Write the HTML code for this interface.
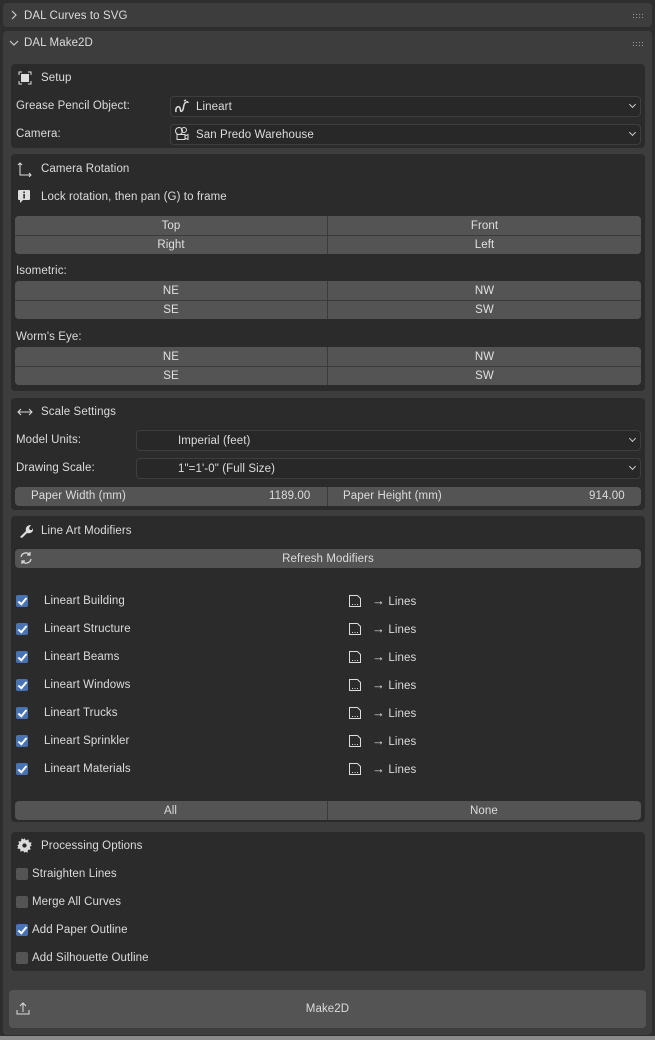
<!DOCTYPE html>
<html><head><meta charset="utf-8"><style>
*{box-sizing:border-box;margin:0;padding:0}
body{width:655px;height:1040px;background:#2e2e2e;position:relative;overflow:hidden;font-family:"Liberation Sans","DejaVu Sans",sans-serif;font-size:11.5px;letter-spacing:0.1px;color:#dcdcdc}
.a{position:absolute}
.pan{position:absolute;left:3px;right:3px;background:#3d3d3d;border-radius:4px}
.box{position:absolute;left:11px;width:634px;background:#2b2b2b;border-radius:4px}
.t{position:absolute;white-space:nowrap;line-height:16px}
.btn{position:absolute;background:#545454;text-align:center;line-height:20px;color:#e0e0e0}
.dd{position:absolute;left:170px;width:471px;height:21px;background:#282828;border:1px solid #3e3e3e;border-radius:4px;line-height:20px;padding-left:25px}
.dd:after{content:"";position:absolute;right:5px;top:5px;width:4px;height:4px;border-right:1.5px solid #ccc;border-bottom:1.5px solid #ccc;transform:rotate(45deg)}
.cb{position:absolute;width:12px;height:12px;border-radius:2px;background:#4772b3}
.cb:after{content:"";position:absolute;left:3.5px;top:1px;width:3px;height:7px;border-right:2px solid #fff;border-bottom:2px solid #fff;transform:rotate(40deg)}
.cbo{position:absolute;width:12px;height:12px;border-radius:2px;background:#545454}
.dots{position:absolute;right:11px;width:11px;height:5px;background-image:radial-gradient(#999 0.6px,transparent 0.8px);background-size:3px 3px}
</style></head><body>
<div class="pan" style="top:3px;height:24px"></div>
<svg class="a" style="left:11px;top:10px" width="6" height="10" viewBox="0 0 6 10" fill="none" stroke="#ccc" stroke-width="1.2"><path d="M1 1l4 4-4 4"/></svg>
<div class="t" style="left:24px;top:8px">DAL Curves to SVG</div>
<div class="dots" style="top:13px;right:12px"></div>

<div class="pan" style="top:31px;height:1004px"></div>
<svg class="a" style="left:9px;top:40px" width="10" height="6" viewBox="0 0 10 6" fill="none" stroke="#ccc" stroke-width="1.2"><path d="M1 1l4 4 4-4"/></svg>
<div class="t" style="left:24px;top:35px">DAL Make2D</div>
<div class="dots" style="top:41px;right:12px"></div>

<!-- Setup -->
<div class="box" style="top:64px;height:84px"></div>
<svg class="a" style="left:18px;top:71px" width="14" height="14" viewBox="0 0 14 14" fill="none" stroke="#ddd" stroke-width="1"><path d="M1 4V1h3M10 1h3v3M13 10v3h-3M4 13H1v-3"/><rect x="3.5" y="3.5" width="7" height="7" fill="#ddd"/></svg>
<div class="t" style="left:41px;top:70px">Setup</div>
<div class="t" style="left:16px;top:98px">Grease Pencil Object:</div>
<div class="dd" style="top:96px">Lineart</div>
<svg class="a" style="left:174px;top:99px" width="16" height="14" viewBox="0 0 16 14" fill="none" stroke="#ddd" stroke-width="1.5"><path d="M2 13C1 8 5 6 6 9s0 4 2 3 1-6 3-8 3-1 3 0M10 2l2-1"/></svg>
<div class="t" style="left:16px;top:126px">Camera:</div>
<div class="dd" style="top:124px">San Predo Warehouse</div>
<svg class="a" style="left:174px;top:126px" width="16" height="15" viewBox="0 0 16 15" fill="none" stroke="#ddd" stroke-width="1"><circle cx="5" cy="5" r="3.5"/><circle cx="10" cy="4" r="2.5"/><rect x="3" y="8.5" width="8" height="5"/><path d="M11 10l3-1.5v5L11 12"/></svg>

<!-- Camera rotation -->
<div class="box" style="top:154px;height:237px"></div>
<svg class="a" style="left:17px;top:161px" width="16" height="16" viewBox="0 0 16 16" fill="none" stroke="#ddd" stroke-width="1"><path d="M3 2v12h11M1 4l2-2 2 2M12 12l2 2-2 2"/></svg>
<div class="t" style="left:41px;top:161px">Camera Rotation</div>
<svg class="a" style="left:17px;top:189px" width="14" height="14" viewBox="0 0 14 14"><path d="M2 1h10a1 1 0 0 1 1 1v8a1 1 0 0 1-1 1H6l-3 3v-3H2a1 1 0 0 1-1-1V2a1 1 0 0 1 1-1z" fill="#ddd"/><rect x="6.3" y="5" width="1.6" height="4.5" fill="#2b2b2b"/><rect x="6.3" y="2.5" width="1.6" height="1.6" fill="#2b2b2b"/></svg>
<div class="t" style="left:41px;top:189px">Lock rotation, then pan (G) to frame</div>
<div class="a" style="left:15px;top:216px;width:626px;height:38px;background:#545454;border-radius:4px;overflow:hidden">
<div class="btn" style="left:0;top:0;width:312px">Top</div><div class="btn" style="left:313px;top:0;width:313px">Front</div>
<div class="btn" style="left:0;top:19px;width:312px;border-top:1px solid #3a3a3a;line-height:19px">Right</div><div class="btn" style="left:313px;top:19px;width:313px;border-top:1px solid #3a3a3a;line-height:19px">Left</div>
<div class="a" style="left:312px;top:0;width:1px;height:38px;background:#3a3a3a"></div></div>
<div class="t" style="left:16px;top:263px">Isometric:</div>
<div class="a" style="left:15px;top:281px;width:626px;height:38px;background:#545454;border-radius:4px;overflow:hidden">
<div class="btn" style="left:0;top:0;width:312px">NE</div><div class="btn" style="left:313px;top:0;width:313px">NW</div>
<div class="btn" style="left:0;top:19px;width:312px;border-top:1px solid #3a3a3a;line-height:19px">SE</div><div class="btn" style="left:313px;top:19px;width:313px;border-top:1px solid #3a3a3a;line-height:19px">SW</div>
<div class="a" style="left:312px;top:0;width:1px;height:38px;background:#3a3a3a"></div></div>
<div class="t" style="left:16px;top:329px">Worm's Eye:</div>
<div class="a" style="left:15px;top:347px;width:626px;height:38px;background:#545454;border-radius:4px;overflow:hidden">
<div class="btn" style="left:0;top:0;width:312px">NE</div><div class="btn" style="left:313px;top:0;width:313px">NW</div>
<div class="btn" style="left:0;top:19px;width:312px;border-top:1px solid #3a3a3a;line-height:19px">SE</div><div class="btn" style="left:313px;top:19px;width:313px;border-top:1px solid #3a3a3a;line-height:19px">SW</div>
<div class="a" style="left:312px;top:0;width:1px;height:38px;background:#3a3a3a"></div></div>

<!-- Scale -->
<div class="box" style="top:398px;height:112px"></div>
<svg class="a" style="left:17px;top:406px" width="16" height="12" viewBox="0 0 16 12" fill="none" stroke="#ddd" stroke-width="1"><path d="M1 6h14M4 3L1 6l3 3M12 3l3 3-3 3"/></svg>
<div class="t" style="left:41px;top:404px">Scale Settings</div>
<div class="t" style="left:16px;top:432px">Model Units:</div>
<div class="dd" style="top:430px;left:136px;width:505px;padding-left:41px">Imperial (feet)</div>
<div class="t" style="left:16px;top:460px">Drawing Scale:</div>
<div class="dd" style="top:458px;left:136px;width:505px;padding-left:41px">1"=1'-0" (Full Size)</div>
<div class="a" style="left:15px;top:487px;width:626px;height:19px;background:#545454;border-radius:4px"></div>
<div class="a" style="left:327px;top:487px;width:1px;height:19px;background:#3a3a3a"></div>
<div class="t" style="left:31px;top:488px">Paper Width (mm)</div>
<div class="t" style="left:269px;top:488px">1189.00</div>
<div class="t" style="left:343px;top:488px">Paper Height (mm)</div>
<div class="t" style="left:589px;top:488px">914.00</div>

<!-- Line art -->
<div class="box" style="top:516px;height:306px"></div>
<svg class="a" style="left:17px;top:523px" width="16" height="16" viewBox="0 0 16 16"><path d="M3 14l6-6c-1-3 1-6 5-6l-2 3 1 2 2 0 1-2c1 4-3 6-6 5l-5 5z" fill="#ddd"/></svg>
<div class="t" style="left:41px;top:523px">Line Art Modifiers</div>
<div class="a" style="left:15px;top:549px;width:626px;height:19px;background:#545454;border-radius:4px;text-align:center;line-height:20px">Refresh Modifiers</div>
<svg class="a" style="left:19px;top:551px" width="14" height="14" viewBox="0 0 14 14" fill="none" stroke="#ddd" stroke-width="1.2"><path d="M2 6a5 5 0 0 1 9-2M12 8a5 5 0 0 1-9 2M11 1v3H8M3 13v-3h3"/></svg>

<div id="mods"></div>
<script>
var n=["Building","Structure","Beams","Windows","Trucks","Sprinkler","Materials"],h="";
n.forEach(function(s,i){var y=601+28*i;
h+='<div class="cb" style="left:16px;top:'+(y-6)+'px"></div><div class="t" style="left:44px;top:'+(y-8)+'px">Lineart '+s+'</div>';
h+='<svg class="a" style="left:348px;top:'+(y-7)+'px" width="14" height="14" viewBox="0 0 14 14" fill="none" stroke="#ddd" stroke-width="1"><path d="M1.5 1.5h8l3 3v8h-11z"/><path d="M4 10.5h1M6.5 10.5h1M9 10.5h1" /></svg>';
h+='<div class="t" style="left:372px;top:'+(y-8)+'px"><span style="font-size:13px">&#x2192;</span> Lines</div>';});
document.getElementById("mods").innerHTML=h;
</script>
<div class="a" style="left:15px;top:801px;width:626px;height:19px;background:#545454;border-radius:4px"></div>
<div class="a" style="left:327px;top:801px;width:1px;height:19px;background:#3a3a3a"></div>
<div class="t" style="left:164px;top:803px">All</div>
<div class="t" style="left:470px;top:803px">None</div>

<!-- Processing -->
<div class="box" style="top:832px;height:139px"></div>
<svg class="a" style="left:17px;top:838px" width="15" height="15" viewBox="0 0 16 16"><path d="M8 0l1.5 2.5 2.8-1 .3 3 3 .3-1 2.8L16 8l-2.4 1.5 1 2.8-3 .3-.3 3-2.8-1L8 16l-1.5-2.4-2.8 1-.3-3-3-.3 1-2.8L0 8l2.4-1.5-1-2.8 3-.3.3-3 2.8 1z" fill="#ddd"/><circle cx="8" cy="8" r="2.3" fill="#2b2b2b"/></svg>
<div class="t" style="left:41px;top:838px">Processing Options</div>
<div class="cbo" style="left:16px;top:868px"></div><div class="t" style="left:32px;top:866px">Straighten Lines</div>
<div class="cbo" style="left:16px;top:896px"></div><div class="t" style="left:32px;top:894px">Merge All Curves</div>
<div class="cb" style="left:16px;top:924px"></div><div class="t" style="left:32px;top:922px">Add Paper Outline</div>
<div class="cbo" style="left:16px;top:952px"></div><div class="t" style="left:32px;top:950px">Add Silhouette Outline</div>

<div class="a" style="left:9px;top:990px;width:637px;height:38px;background:#545454;border-radius:4px;text-align:center;line-height:38px">Make2D</div>
<svg class="a" style="left:15px;top:1001px" width="16" height="16" viewBox="0 0 16 16" fill="none" stroke="#ddd" stroke-width="1"><path d="M2 9v4h12v-4M8 11V2M5 5l3-3 3 3"/></svg>
<div class="a" style="left:0;top:1036px;width:655px;height:4px;background:#8a8a8a"></div>
</body></html>
